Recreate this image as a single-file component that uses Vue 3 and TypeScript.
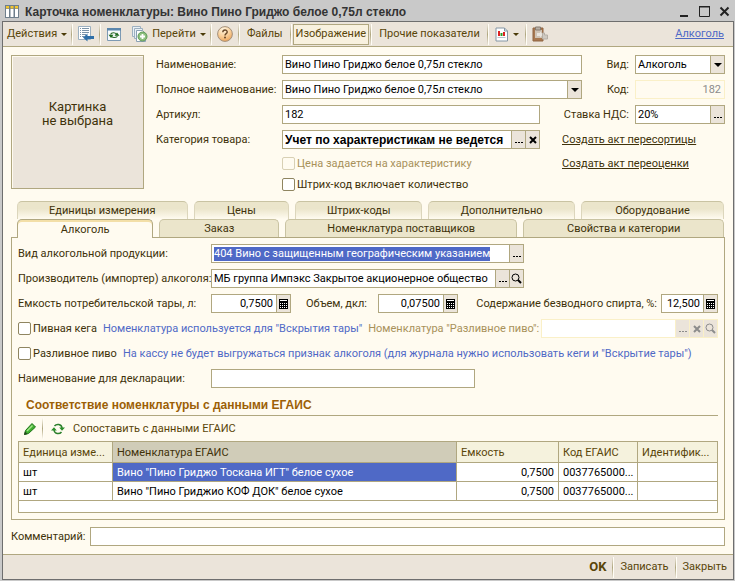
<script setup lang="ts">
import { onMounted, reactive, ref } from 'vue'

interface Tab {
  title: string
  span: number
  active?: boolean
}

interface EgaisRow {
  unit: string
  name: string
  volume: string
  code: string
  ident: string
}

const upperTabs: Tab[] = [
  { title: 'Единицы измерения', span: 171 },
  { title: 'Цены', span: 95 },
  { title: 'Штрих-коды', span: 127 },
  { title: 'Дополнительно', span: 147 },
  { title: 'Оборудование', span: 143 },
]

const lowerTabs: Tab[] = [
  { title: 'Алкоголь', span: 136, active: true },
  { title: 'Заказ', span: 119 },
  { title: 'Номенклатура поставщиков', span: 233 },
  { title: 'Свойства и категории', span: 201 },
]

const rows: EgaisRow[] = [
  { unit: 'шт', name: 'Вино "Пино Гриджо Тоскана ИГТ" белое сухое', volume: '0,7500', code: '0037765000...', ident: '' },
  { unit: 'шт', name: 'Вино "Пино Гриджио КОФ ДОК" белое сухое', volume: '0,7500', code: '0037765000...', ident: '' },
]

const form = reactive({
  name: 'Вино Пино Гриджо белое 0,75л стекло',
  fullName: 'Вино Пино Гриджо белое 0,75л стекло',
  article: '182',
  category: 'Учет по характеристикам не ведется',
  kind: 'Алкоголь',
  code: '182',
  vat: '20%',
  alcoholKind: '404 Вино с защищенным географическим указанием',
  producer: 'МБ группа Импэкс Закрытое акционерное общество',
  capacity: '0,7500',
  volume: '0,07500',
  spirit: '12,500',
  draftItem: '',
  declaration: '',
  comment: '',
  priceByTrait: false,
  barcodeQty: false,
  keg: false,
  draft: false,
})

const selectedRow = ref(0)
const alcoholKindInput = ref<HTMLInputElement | null>(null)

onMounted(() => {
  alcoholKindInput.value?.focus()
  alcoholKindInput.value?.select()
})
</script>

<template>
  <div class="window">
    <header class="titlebar">
      <svg class="app-icon" width="14" height="13" viewBox="0 0 14 13" aria-hidden="true">
        <rect x="0" y="0" width="14" height="13" fill="#6f7f8c" />
        <path d="M1 4h3v8H1zM5.500 4h3v8h-3zM10 4h3v8h-3z" fill="#fff" />
        <path d="M1 1h3v2.500H1zM5.500 1h3v2.500h-3zM10 1h3v2.500h-3z" fill="#f2c530" />
      </svg>
      <h1>Карточка номенклатуры: Вино Пино Гриджо белое 0,75л стекло</h1>
      <div class="win-buttons">
        <button type="button" aria-label="Свернуть">
          <svg width="12" height="12" viewBox="0 0 12 12"><path d="M1 9h8v2H1z" fill="#222" /></svg>
        </button>
        <button type="button" aria-label="Развернуть">
          <svg width="12" height="12" viewBox="0 0 12 12"><path d="M.5 .5h10v10H.500z" fill="none" stroke="#222" /><path d="M0 0h11v1.500H0z" fill="#222" /></svg>
        </button>
        <button type="button" aria-label="Закрыть окно">
          <svg width="12" height="12" viewBox="0 0 12 12"><path d="M1.500 1.500l8 8M9.500 1.500l-8 8" stroke="#222" stroke-width="2" /></svg>
        </button>
      </div>
    </header>

    <div class="body">
      <nav class="toolbar">
        <button type="button" class="tool menu">Действия <i class="caret"></i></button>
        <span class="sep"></span>
        <button type="button" class="tool icon" aria-label="Перечитать">
          <svg width="16" height="16" viewBox="0 0 16 16">
            <path d="M.5 .5h12v13H.500z" fill="#fff" stroke="#9db0c0" />
            <path d="M2 2.500h1M4 2.500h7M2 4.500h1M4 4.500h7M2 6.500h1M4 6.500h7M2 8.500h1M4 8.500h4M2 10.500h1M4 10.500h2" stroke="#7b93a8" />
            <path d="M5 11.500l4.500-4V10H16v3H9.500v2.500z" fill="#2f6fa8" />
          </svg>
        </button>
        <span class="sep"></span>
        <button type="button" class="tool icon" aria-label="Обновить">
          <svg width="16" height="16" viewBox="0 0 16 16">
            <path d="M1.500 2.500h13v12h-13z" fill="#f8fbfd" stroke="#7d9ab4" />
            <path d="M1 2h14v2.500H1z" fill="#5b86ad" />
            <path d="M4.500 8.500c1-2 4.500-2.500 6 0M5 9.800c1 2.200 4.500 2.200 6.500.6" fill="none" stroke="#2b6a2b" stroke-width="1.100" />
            <path d="M8.500 9.700h5L11 6.500zM7.500 8.800H2.500L5 12z" fill="#1f6a1f" />
          </svg>
        </button>
        <button type="button" class="tool icon copy" aria-label="Скопировать">
          <svg width="16" height="16" viewBox="0 0 16 16">
            <path d="M.5 .5h8v10h-8z" fill="#e9f0f5" stroke="#9db0c0" />
            <path d="M2.500 2.500h8v10h-8z" fill="#e9f0f5" stroke="#9db0c0" />
            <path d="M4.500 4.500h6l3 3v8h-9z" fill="#fff" stroke="#8aa0b4" />
            <circle cx="10.500" cy="10.500" r="4.500" fill="#8cbf7e" stroke="#5f9a58" />
            <path d="M10.500 8v5M8 10.500h5" stroke="#fff" stroke-width="1.800" />
          </svg>
        </button>
        <button type="button" class="tool menu">Перейти <i class="caret"></i></button>
        <span class="sep"></span>
        <button type="button" class="tool icon" aria-label="Справка">
          <svg width="16" height="16" viewBox="0 0 16 16">
            <defs>
              <radialGradient id="help-fill" cx=".4" cy=".2" r=".9">
                <stop offset="0" stop-color="#fff6e2" />
                <stop offset=".5" stop-color="#fad09a" />
                <stop offset="1" stop-color="#e89a4c" />
              </radialGradient>
            </defs>
            <circle cx="8" cy="8" r="7.400" fill="url(#help-fill)" stroke="#a3907c" />
            <path d="M5.800 6.200c0-3 4.400-2.900 4.400-.3 0 1.700-2.200 1.700-2.200 3.500" fill="none" stroke="#6b4a2a" stroke-width="1.400" />
            <circle cx="8" cy="11.600" r="1" fill="#6b4a2a" />
          </svg>
        </button>
        <span class="sep"></span>
        <button type="button" class="tool">Файлы</button>
        <span class="sep"></span>
        <button type="button" class="tool pressed" aria-pressed="true">Изображение</button>
        <span class="sep"></span>
        <button type="button" class="tool">Прочие показатели</button>
        <span class="sep"></span>
        <button type="button" class="tool menu chart" aria-label="Отчеты">
          <svg width="14" height="15" viewBox="0 0 14 15">
            <path d="M1 1h8.500l3 3v10H1z" fill="#fff" stroke="#8496a5" />
            <path d="M9.500 1v3h3" fill="none" stroke="#8496a5" />
            <path d="M3 4h2v5H3z" fill="#d22" /><path d="M5.500 6h2v3h-2z" fill="#2a9a2a" /><path d="M8 5h2v4H8z" fill="#d22" />
            <path d="M2.500 10.500h8" stroke="#b9c4cc" />
          </svg>
          <i class="caret"></i>
        </button>
        <span class="sep"></span>
        <button type="button" class="tool icon" aria-label="Вставить">
          <svg width="16" height="16" viewBox="0 0 16 16">
            <path d="M1 2h10v13H1z" fill="#a87850" stroke="#8f6542" />
            <path d="M3 4h7v8H3z" fill="#cfc3b4" />
            <path d="M3.500 1h5v3h-5z" fill="#b8b0a6" stroke="#857b70" />
            <path d="M5 7h3v-1.500L11 8.500 8 11.500V10H5z" fill="#e9e5df" />
            <path d="M10.500 7h2v2h3v4h-5z" fill="#cfcac2" stroke="#b5afa6" />
          </svg>
        </button>
        <a class="kind-link" href="#">Алкоголь</a>
      </nav>

      <main class="content">
        <section class="card">
          <div class="photo">Картинка<br />не выбрана</div>
          <div class="fields">
            <label for="name">Наименование:</label>
            <div class="field wide"><input id="name" v-model="form.name" type="text" /></div>
            <label class="side" for="kind">Вид:</label>
            <div class="field last">
              <select id="kind" v-model="form.kind"><option>Алкоголь</option></select>
              <span class="btn drop" aria-hidden="true"><i class="caret big"></i></span>
            </div>

            <label for="full-name">Полное наименование:</label>
            <div class="field wide">
              <input id="full-name" v-model="form.fullName" type="text" />
              <button type="button" class="btn" aria-label="Открыть список"><i class="caret big"></i></button>
            </div>
            <label class="side" for="code">Код:</label>
            <div class="field last disabled"><input id="code" v-model="form.code" class="num" type="text" disabled /></div>

            <label for="article">Артикул:</label>
            <div class="field"><input id="article" v-model="form.article" type="text" /></div>
            <label class="side long" for="vat">Ставка НДС:</label>
            <div class="field last">
              <input id="vat" v-model="form.vat" type="text" />
              <button type="button" class="btn" aria-label="Выбрать ставку"><i class="dots"></i></button>
            </div>

            <label for="category">Категория товара:</label>
            <div class="field">
              <input id="category" v-model="form.category" class="strong" type="text" />
              <button type="button" class="btn" aria-label="Выбрать категорию"><i class="dots"></i></button>
              <button type="button" class="btn" aria-label="Очистить категорию">
                <svg width="8" height="8" viewBox="0 0 8 8"><path d="M1 1l6 6M7 1L1 7" stroke="currentColor" stroke-width="2" /></svg>
              </button>
            </div>
            <a class="act" href="#">Создать акт пересортицы</a>

            <label class="check second disabled-text">
              <input v-model="form.priceByTrait" type="checkbox" disabled /><span>Цена задается на характеристику</span>
            </label>
            <a class="act" href="#">Создать акт переоценки</a>

            <label class="check second">
              <input v-model="form.barcodeQty" type="checkbox" /><span>Штрих-код включает количество</span>
            </label>
          </div>
        </section>

        <section class="tabs">
          <div class="tab-row upper">
            <button v-for="tab in upperTabs" :key="tab.title" type="button" class="tab" :style="{ flexGrow: tab.span }">
              {{ tab.title }}
            </button>
          </div>
          <div class="tab-row">
            <button
              v-for="tab in lowerTabs"
              :key="tab.title"
              type="button"
              class="tab"
              :class="{ active: tab.active }"
              :style="{ flexGrow: tab.span }"
            >
              {{ tab.title }}
            </button>
          </div>

          <div class="panel">
            <div class="line">
              <label class="lead" for="alcohol-kind">Вид алкогольной продукции:</label>
              <div class="field long">
                <input id="alcohol-kind" ref="alcoholKindInput" v-model="form.alcoholKind" type="text" />
                <button type="button" class="btn" aria-label="Выбрать вид"><i class="dots"></i></button>
              </div>
            </div>
            <div class="line">
              <label class="lead" for="producer">Производитель (импортер) алкоголя:</label>
              <div class="field long">
                <input id="producer" v-model="form.producer" type="text" />
                <button type="button" class="btn" aria-label="Выбрать производителя"><i class="dots"></i></button>
                <button type="button" class="btn" aria-label="Открыть производителя">
                  <svg width="11" height="11" viewBox="0 0 11 11"><circle cx="4.500" cy="4.500" r="3.500" fill="none" stroke="currentColor" /><path d="M7 7l3 3" stroke="currentColor" stroke-width="2" /></svg>
                </button>
              </div>
            </div>
            <div class="line">
              <label class="lead" for="capacity">Емкость потребительской тары, л:</label>
              <div class="field short">
                <input id="capacity" v-model="form.capacity" class="num" type="text" />
                <button type="button" class="btn" aria-label="Калькулятор емкости">
                  <svg width="9" height="10" viewBox="0 0 9 10"><path d="M0 0h9v10H0z" fill="#000" /><path d="M1 1h7v1H1zM1 4h1v1H1zM3 4h1v1H3zM5 4h1v1H5zM7 4h1v1H7zM1 6h1v1H1zM3 6h1v1H3zM5 6h1v1H5zM7 6h1v1H7zM1 8h1v1H1zM3 8h1v1H3zM5 8h1v1H5zM7 8h1v1H7z" fill="#fff" /></svg>
                </button>
              </div>
              <label class="mid" for="volume">Объем, дкл:</label>
              <div class="field short">
                <input id="volume" v-model="form.volume" class="num" type="text" />
                <button type="button" class="btn" aria-label="Калькулятор объема">
                  <svg width="9" height="10" viewBox="0 0 9 10"><path d="M0 0h9v10H0z" fill="#000" /><path d="M1 1h7v1H1zM1 4h1v1H1zM3 4h1v1H3zM5 4h1v1H5zM7 4h1v1H7zM1 6h1v1H1zM3 6h1v1H3zM5 6h1v1H5zM7 6h1v1H7zM1 8h1v1H1zM3 8h1v1H3zM5 8h1v1H5zM7 8h1v1H7z" fill="#fff" /></svg>
                </button>
              </div>
              <label class="push" for="spirit">Содержание безводного спирта, %:</label>
              <div class="field tiny">
                <input id="spirit" v-model="form.spirit" class="num" type="text" />
                <button type="button" class="btn" aria-label="Калькулятор спирта">
                  <svg width="9" height="10" viewBox="0 0 9 10"><path d="M0 0h9v10H0z" fill="#000" /><path d="M1 1h7v1H1zM1 4h1v1H1zM3 4h1v1H3zM5 4h1v1H5zM7 4h1v1H7zM1 6h1v1H1zM3 6h1v1H3zM5 6h1v1H5zM7 6h1v1H7zM1 8h1v1H1zM3 8h1v1H3zM5 8h1v1H5zM7 8h1v1H7z" fill="#fff" /></svg>
                </button>
              </div>
            </div>
            <div class="line notes">
              <label class="check"><input v-model="form.keg" type="checkbox" /><span>Пивная кега</span></label>
              <span class="hint">Номенклатура используется для "Вскрытия тары"</span>
              <label class="disabled-text" for="draft-item">Номенклатура "Разливное пиво":</label>
              <div class="field fill disabled white">
                <input id="draft-item" v-model="form.draftItem" type="text" disabled />
                <button type="button" class="btn" disabled aria-label="Выбрать номенклатуру"><i class="dots"></i></button>
                <button type="button" class="btn" disabled aria-label="Очистить номенклатуру">
                  <svg width="8" height="8" viewBox="0 0 8 8"><path d="M1 1l6 6M7 1L1 7" stroke="currentColor" stroke-width="2" /></svg>
                </button>
                <button type="button" class="btn" disabled aria-label="Открыть номенклатуру">
                  <svg width="11" height="11" viewBox="0 0 11 11"><circle cx="4.500" cy="4.500" r="3.500" fill="none" stroke="currentColor" /><path d="M7 7l3 3" stroke="currentColor" stroke-width="2" /></svg>
                </button>
              </div>
            </div>
            <div class="line notes">
              <label class="check"><input v-model="form.draft" type="checkbox" /><span>Разливное пиво</span></label>
              <span class="hint">На кассу не будет выгружаться признак алкоголя (для журнала нужно использовать кеги и "Вскрытие тары")</span>
            </div>
            <div class="line">
              <label class="lead" for="declaration">Наименование для декларации:</label>
              <div class="field medium"><input id="declaration" v-model="form.declaration" type="text" /></div>
            </div>

            <h2>Соответствие номенклатуры с данными ЕГАИС</h2>
            <div class="mini-bar">
              <button type="button" class="mini edit" aria-label="Изменить">
                <svg width="12" height="12" viewBox="0 0 12 12">
                  <path d="M.5 11.500l1-4 6.500-7L11.500 4l-7 6.500z" fill="#3fae2e" stroke="#1f7418" />
                  <path d="M3 8l5.500-5.500" stroke="#a5e68c" stroke-width="1.500" />
                  <path d="M0 12l1-3.500L3.500 11z" fill="#26461f" />
                </svg>
              </button>
              <span class="sep"></span>
              <button type="button" class="mini">
                <svg width="14" height="12" viewBox="0 0 14 12">
                  <path d="M3.500 3C5.500.5 10.500.8 11 5M10.500 9C8.500 11.500 3.500 11.200 3 7" fill="none" stroke="#2b7f2b" stroke-width="1.500" />
                  <path d="M8.200 4.500H14L11 7.800zM5.800 7.500H0L3 4.200z" fill="#2b8f2b" />
                </svg>
                Сопоставить с данными ЕГАИС
              </button>
            </div>

            <div class="grid">
              <table>
                <colgroup>
                  <col class="c-unit" /><col /><col class="c-volume" /><col class="c-code" /><col class="c-ident" />
                </colgroup>
                <thead>
                  <tr>
                    <th>Единица изме...</th>
                    <th class="current">Номенклатура ЕГАИС</th>
                    <th>Емкость</th>
                    <th>Код ЕГАИС</th>
                    <th>Идентифик...</th>
                  </tr>
                </thead>
                <tbody>
                  <tr v-for="(row, i) in rows" :key="i" @click="selectedRow = i">
                    <td>{{ row.unit }}</td>
                    <td :class="{ selected: i === selectedRow }">{{ row.name }}</td>
                    <td class="right">{{ row.volume }}</td>
                    <td>{{ row.code }}</td>
                    <td>{{ row.ident }}</td>
                  </tr>
                </tbody>
              </table>
            </div>
          </div>
        </section>

        <div class="line comment">
          <label for="comment">Комментарий:</label>
          <div class="field fill"><input id="comment" v-model="form.comment" type="text" /></div>
        </div>
      </main>

      <footer class="footer">
        <button type="button" class="tool ok">OK</button>
        <span class="sep"></span>
        <button type="button" class="tool">Записать</button>
        <span class="sep"></span>
        <button type="button" class="tool">Закрыть</button>
      </footer>
    </div>
  </div>
</template>

<style>
body {
  background: #c9c9c9;
}
</style>

<style scoped>
.window,
.window * {
  box-sizing: border-box;
}

.window {
  display: flex;
  flex-direction: column;
  min-height: 100vh;
  padding: 0 1px 1px 2px;
  background: #c9c9c9;
  color: #40320a;
  font: 11px/14px Roboto, "Liberation Sans", sans-serif;
}

button,
input,
select {
  margin: 0;
  padding: 0;
  border: 0;
  border-radius: 0;
  background: none;
  color: inherit;
  font: inherit;
  outline: none;
}

label,
button,
.hint,
a {
  white-space: nowrap;
}

label:not(.check),
.check span,
.hint,
.act {
  padding-top: 1px;
}

svg {
  display: block;
  flex: none;
}

.titlebar {
  display: flex;
  align-items: center;
  height: 21px;
  padding: 2px 3px 0;
}

h1 {
  flex: 1;
  margin: 0 0 0 6px;
  color: #333;
  font: bold 12px/14px "Liberation Sans", sans-serif;
  white-space: nowrap;
}

.win-buttons {
  display: flex;
  gap: 8px;
}

.body {
  display: flex;
  flex: 1;
  flex-direction: column;
  border: 1px solid #6e6e6e;
  background: #fffbf0;
}

.toolbar {
  display: flex;
  align-items: center;
  height: 25px;
  padding: 0 9px 0 0;
  border-bottom: 1px solid #b0a780;
  background: #ebe4da;
}

.tool {
  display: flex;
  align-items: center;
  height: 21px;
  padding: 0 7px;
  color: #594509;
}

.tool.menu {
  gap: 4px;
  padding: 0 4px;
}

.tool.icon {
  padding: 0 5px;
}

.tool.copy {
  padding-right: 0;
}

.tool.chart {
  padding: 0 6px;
}

.tool.pressed {
  margin: 0 1px;
  padding: 0 2px;
  border: 1px solid #b0a780;
  background: #f8f1df;
}

.caret {
  width: 0;
  height: 0;
  border: 3px solid transparent;
  border-top-color: #4a3a08;
  border-bottom: 0;
}

.caret.big {
  border-width: 4px 4px 0;
  border-top-color: #000;
}

.sep {
  width: 2px;
  height: 21px;
  border-right: 1px solid #fffdf6;
  background: linear-gradient(#ebe4da, #b0a780 50%, #ebe4da);
}

.kind-link {
  margin-left: auto;
  color: #4f69c6;
}

.content {
  display: flex;
  flex: 1;
  flex-direction: column;
  padding: 8px;
}

.card {
  display: flex;
  gap: 12px;
}

.photo {
  display: flex;
  align-items: center;
  justify-content: center;
  width: 133px;
  height: 134px;
  padding-bottom: 16px;
  border: 1px solid #b0a780;
  box-shadow: inset 1px 1px #fffbf0;
  background: #ebe4da;
  font-size: 13px;
  text-align: center;
}

.fields {
  display: grid;
  flex: 1;
  grid-template-columns: 126px minmax(0, 1fr) 42px 47px 6px 90px;
  grid-template-rows: repeat(4, 19px) 16px 14px;
  row-gap: 6px;
  align-items: center;
}

.fields > label:not(.side):not(.second) {
  grid-column: 1;
}

.fields > .field {
  grid-column: 2;
}

.fields > .wide {
  grid-column: 2 / 4;
}

.fields > .last {
  grid-column: 6;
}

.fields > .second {
  grid-column: 2;
}

.side {
  grid-column: 4;
  text-align: right;
}

.side.long {
  grid-column: 3 / 5;
}

.act {
  grid-column: 3 / 7;
  justify-self: start;
  margin-left: 22px;
  color: #40320a;
}

.field {
  display: flex;
  min-width: 0;
  height: 19px;
  border: 1px solid #b0a780;
  background: #fff;
  color: #000;
}

.field input,
.field select {
  flex: 1;
  width: 0;
  min-width: 0;
  padding: 1px 2px 0;
  appearance: none;
}

.field input::selection {
  background: #4f69c6;
  color: #fff;
}

.field .num {
  padding-right: 3px;
  text-align: right;
}

.field .strong {
  font: bold 12px/14px "Liberation Sans", sans-serif;
}

.field.disabled {
  border-color: #faf0c8;
  background: #fffbf0;
  color: #8c8c8c;
}

.field.disabled.white {
  background: #fff;
}

.field.disabled .btn {
  border-color: #faf0c8;
  color: #8c8c8c;
}

.btn {
  display: flex;
  flex: none;
  align-items: center;
  justify-content: center;
  width: 14px;
  border-left: 1px solid #b0a780;
  background: #ebe4da;
  color: #000;
}

.dots {
  width: 8px;
  height: 1px;
  margin-top: 6px;
  background: repeating-linear-gradient(90deg, currentColor 0 2px, transparent 2px 3px);
}

.check {
  display: flex;
  align-items: center;
  gap: 2px;
}

.check input {
  width: 13px;
  height: 13px;
  border: 1px solid #8f8560;
  border-radius: 2px;
  background: #fff;
  appearance: none;
}

.check input:disabled {
  border-color: #d8d0b4;
  background: #fffbf0;
}

.disabled-text {
  color: #a8915a;
}

.tabs {
  margin-top: 10px;
}

.tab-row {
  display: flex;
  gap: 6px;
  height: 18px;
  padding: 0 1px 0 6px;
}

.tab {
  flex: 1 1 0;
  min-width: 0;
  height: 18px;
  padding-top: 1px;
  border: 1px solid #c9c3a2;
  border-bottom: 0;
  border-radius: 5px 5px 0 0;
  background: #ebe5cb;
}

.upper .tab {
  border-color: #c9c3a2 #dcd6bc;
  background: linear-gradient(#ebe5cb 40%, #fffbf0);
}

.tab.active {
  position: relative;
  height: 19px;
  border-color: #b0a780;
  box-shadow: inset 0 2px #f3dfa8;
  background: #fffbf0;
}

.panel {
  display: flex;
  flex-direction: column;
  gap: 6px;
  padding: 6px;
  border: 1px solid #b0a780;
}

.line {
  display: flex;
  align-items: center;
  height: 19px;
}

.lead {
  flex: none;
  width: 193px;
}

.field.long {
  flex: 0 1 313px;
}

.field.medium {
  flex: 0 1 264px;
}

.field.short {
  width: 80px;
}

.field.tiny {
  width: 57px;
}

.field.fill {
  flex: 1;
}

.mid {
  width: 87px;
  padding-left: 15px;
}

.push {
  margin-right: 4px;
  margin-left: auto;
}

.notes {
  gap: 6px;
}

.notes .field {
  margin-left: -4px;
}

.hint {
  color: #4f69c6;
}

h2 {
  margin: 0;
  padding: 4px 8px 3px;
  border-bottom: 1px solid #b0a780;
  color: #9c5f06;
  font: bold 12px/14px "Liberation Sans", sans-serif;
}

.mini-bar {
  display: flex;
  align-items: center;
  height: 25px;
  margin: -6px 0;
}

.mini-bar .sep {
  background: linear-gradient(#fffbf0, #b0a780 50%, #fffbf0);
}

.mini {
  display: flex;
  align-items: center;
  gap: 8px;
  padding: 0 7px;
  color: #594509;
}

.edit {
  padding: 0 6px;
}

.grid {
  height: 72px;
  border: 1px solid #b0a780;
  background: #fff;
}

table {
  width: 100%;
  border-collapse: separate;
  border-spacing: 0;
  table-layout: fixed;
}

.c-unit {
  width: 94px;
}

.c-volume {
  width: 102px;
}

.c-code {
  width: 79px;
}

.c-ident {
  width: 79px;
}

th,
td {
  height: 19px;
  padding: 2px 4px 0;
  border-right: 1px solid #b0a780;
  border-bottom: 1px solid #b0a780;
  overflow: hidden;
  color: #000;
  font-weight: normal;
  text-align: left;
  white-space: nowrap;
}

th {
  height: 21px;
  background: #f5f2dd;
  color: #594509;
}

th:last-child,
td:last-child {
  border-right: 0;
}

th.current {
  background: #d0ccb8;
  color: #40320a;
}

td.selected {
  background: #4f69c6;
  color: #fff;
}

td.right {
  text-align: right;
}

.comment {
  gap: 5px;
  margin-top: 7px;
}

.footer {
  display: flex;
  align-items: center;
  justify-content: flex-end;
  height: 25px;
  border-top: 1px solid #b0a780;
  background: #ebe4da;
}

.footer .tool {
  padding: 0 6px;
}

.footer .ok {
  font-size: 13px;
  font-weight: bold;
}
</style>
